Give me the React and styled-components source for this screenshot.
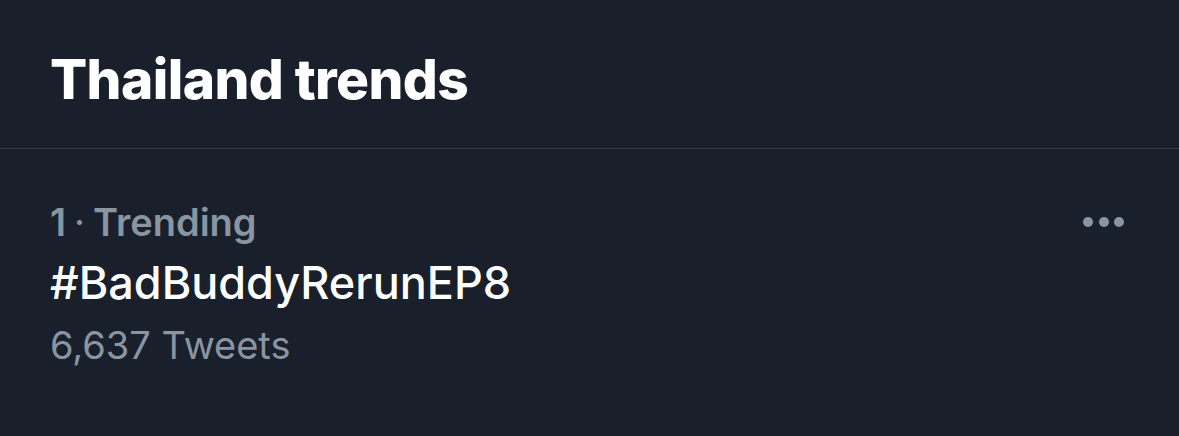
import React from "react";
import styled, { createGlobalStyle } from "styled-components";

const Global = createGlobalStyle`
  html, body { margin: 0; padding: 0; background: #19202b; }
  body { font-family: Inter, "Noto Sans", "Liberation Sans", sans-serif; -webkit-font-smoothing: antialiased; }
`;

const Page = styled.div`
  width: 1179px;
  height: 436px;
  background: #19202b;
  overflow: hidden;
`;

const Header = styled.header`
  padding: 52px 50px 41px;
  border-bottom: 1px solid #343c47;
`;

const Title = styled.h1`
  margin: 0;
  font-size: 55px;
  line-height: 55px;
  font-weight: 800;
  color: #ffffff;
  letter-spacing: -0.6px;
`;

const TrendRow = styled.div`
  display: flex;
  justify-content: space-between;
  align-items: flex-start;
  padding: 51px 55px 0 50px;
`;

const TrendBody = styled.div`
  display: flex;
  flex-direction: column;
`;

const Line = styled.div`
  font-size: ${(p) => p.$size}px;
  line-height: ${(p) => p.$lh}px;
  font-weight: ${(p) => p.$weight};
  color: ${(p) => p.$color};
  margin-top: ${(p) => p.$top || 0}px;
  letter-spacing: ${(p) => p.$spacing || 0}px;
`;

const Dot = styled.span`
  display: inline-block;
  margin: 0 8px;
  font-weight: 400;
`;

const More = styled.div`
  display: flex;
  gap: 5.5px;
  margin-top: 17px;
`;

const Circle = styled.span`
  width: 10px;
  height: 10px;
  border-radius: 50%;
  background: #8a95a2;
`;

export default function App() {
  return (
    <Page>
      <Global />
      <Header>
        <Title>Thailand trends</Title>
      </Header>
      <TrendRow>
        <TrendBody>
          <Line $size={38} $lh={44} $weight={600} $color="#8a95a2">
            1<Dot>·</Dot>Trending
          </Line>
          <Line $size={45} $lh={52} $weight={500} $color="#ffffff" $top={13}>
            #BadBuddyRerunEP8
          </Line>
          <Line $size={38} $lh={46} $weight={400} $color="#8a95a2" $top={13}>
            6,637 Tweets
          </Line>
        </TrendBody>
        <More>
          <Circle />
          <Circle />
          <Circle />
        </More>
      </TrendRow>
    </Page>
  );
}
